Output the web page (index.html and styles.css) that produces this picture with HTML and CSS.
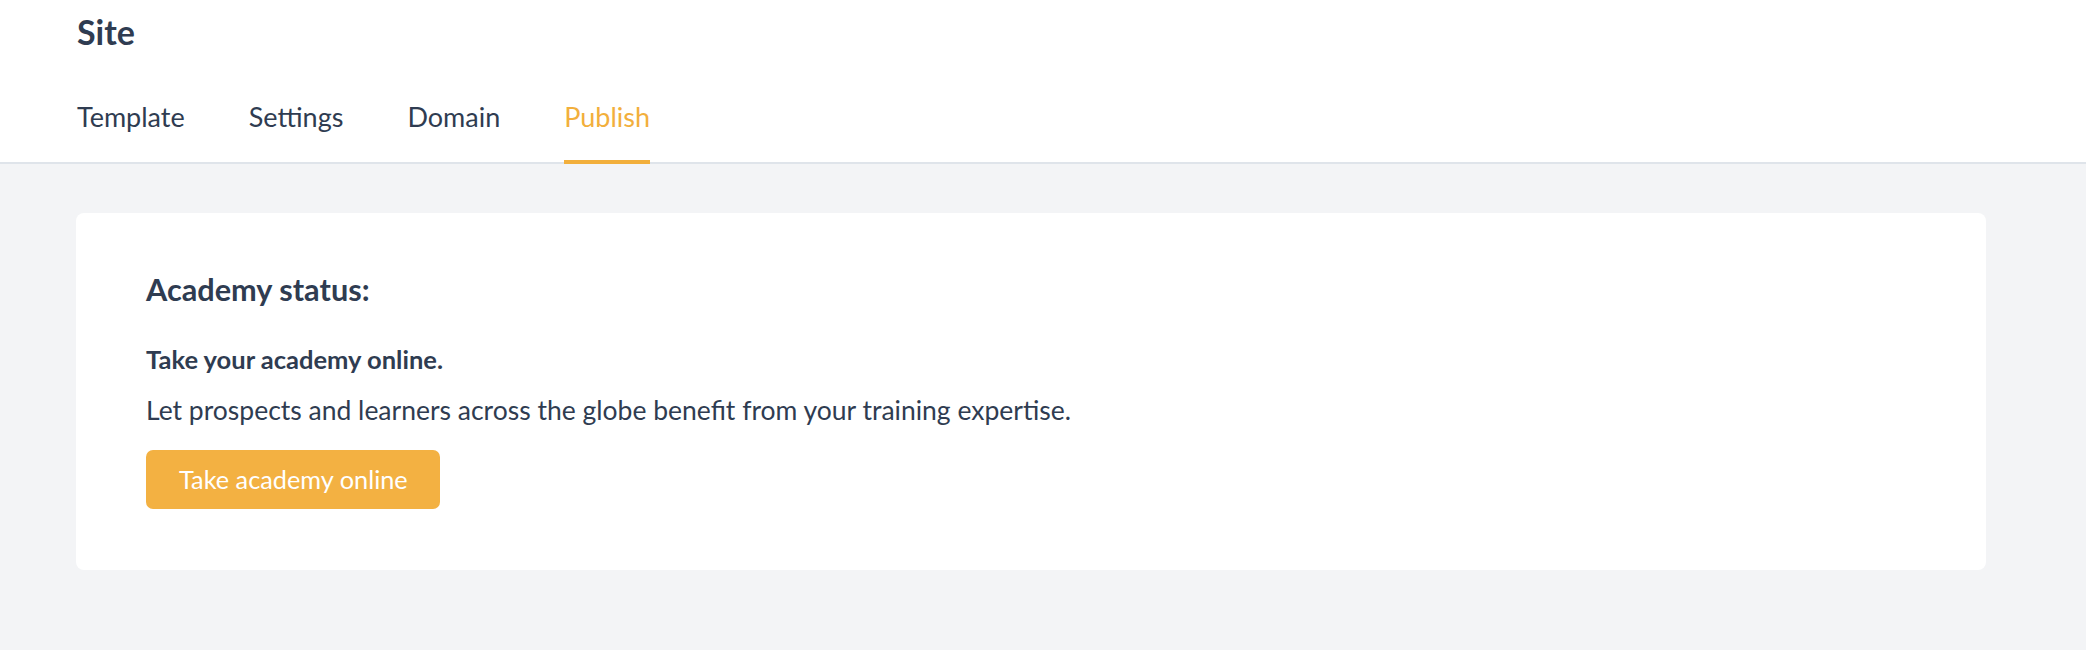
FILE: index.html
```html
<!DOCTYPE html>
<html lang="en">
<head>
<meta charset="utf-8">
<title>Site - Publish</title>
<link rel="stylesheet" href="styles.css">
</head>
<body>
<header class="header">
  <h1 class="title">Site</h1>
  <nav class="tabs">
    <a class="tab">Template</a>
    <a class="tab">Settings</a>
    <a class="tab">Domain</a>
    <a class="tab active">Publish</a>
  </nav>
</header>
<main class="main">
  <section class="card">
    <h2 class="heading">Academy status:</h2>
    <p class="sub">Take your academy online.</p>
    <p class="body-text">Let prospects and learners across the globe benefit from your training expertise.</p>
    <button class="btn">Take academy online</button>
  </section>
</main>
</body>
</html>
```

FILE: styles.css
```css
* { box-sizing: border-box; }
html, body {
  margin: 0;
  padding: 0;
}
body {
  background: #f3f4f6;
  font-family: "Lato", "Open Sans", sans-serif;
  color: #2f3c51;
  width: 2086px;
  height: 650px;
  overflow: hidden;
}
.header {
  background: #ffffff;
  border-bottom: 2px solid #dfe4ea;
  padding: 12px 0 0 77px;
  height: 164px;
}
.title {
  margin: 0;
  font-size: 34px;
  line-height: 40px;
  font-weight: 700;
}
.tabs {
  display: flex;
  gap: 64px;
  margin-top: 49px;
}
.tab {
  font-size: 27px;
  line-height: 32px;
  padding-bottom: 27px;
  border-bottom: 4px solid transparent;
  color: #2f3c51;
  cursor: pointer;
}
.tab.active {
  color: #f2af3c;
  border-bottom-color: #f2af3c;
}
.main {
  padding: 49px 100px 0 76px;
}
.card {
  background: #ffffff;
  border-radius: 8px;
  width: 1910px;
  height: 357px;
  padding: 59px 70px 0 70px;
}
.heading {
  margin: 0;
  font-size: 30.7px;
  line-height: 36px;
  font-weight: 700;
}
.sub {
  margin: 36px 0 0;
  font-size: 25.5px;
  line-height: 30px;
  font-weight: 700;
}
.body-text {
  margin: 20px 0 0;
  font-size: 26.5px;
  line-height: 32px;
  font-weight: 400;
}
.btn {
  margin-top: 24px;
  display: block;
  height: 59px;
  padding: 0 32px 0 33px;
  border: none;
  border-radius: 7px;
  background: #f3b142;
  color: #ffffff;
  font-family: inherit;
  font-size: 25.3px;
  line-height: 59px;
  font-weight: 400;
  cursor: pointer;
}
```
